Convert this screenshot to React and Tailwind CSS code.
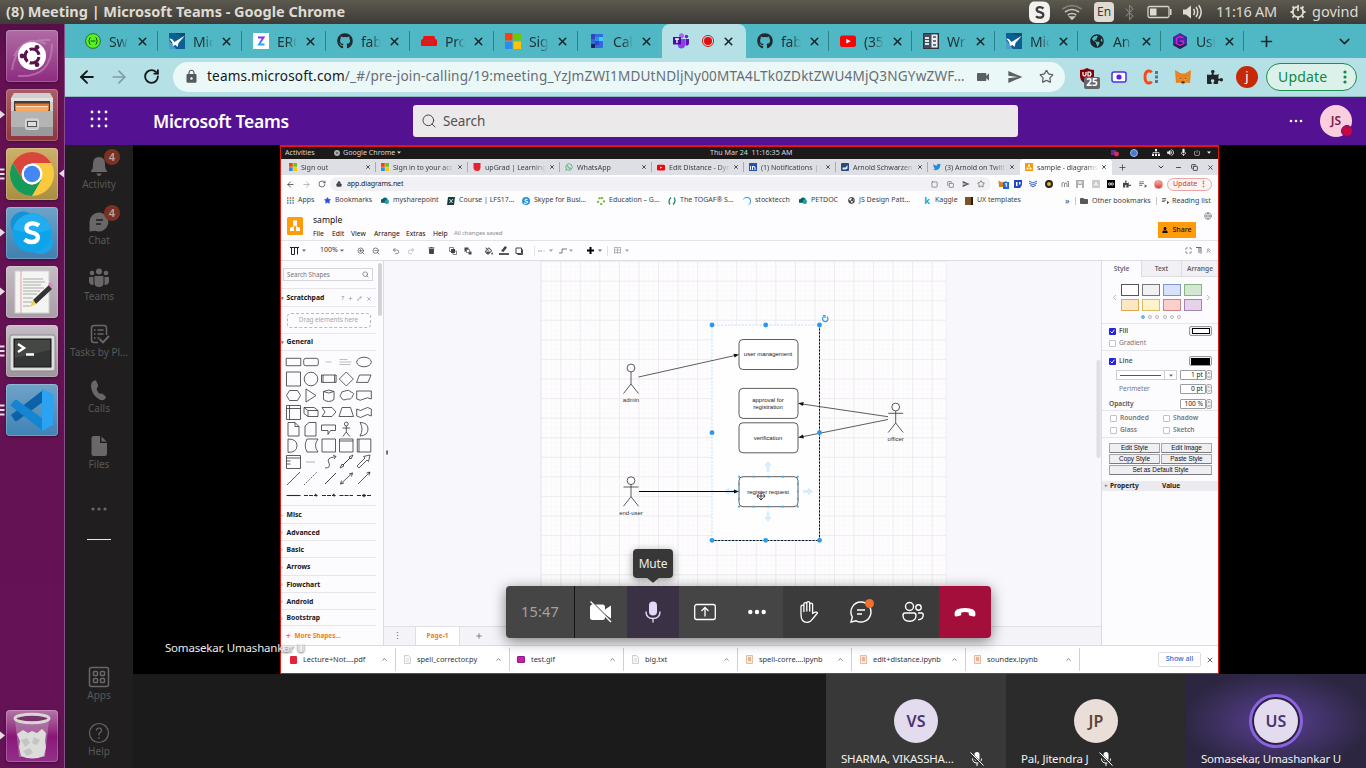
import React from "react";
import {
  ArrowLeft, ArrowRight, RotateCw, X, Plus, ChevronDown, ChevronUp, ChevronLeft, ChevronRight, Search, Lock, Star,
  ZoomIn, ZoomOut, Undo2, Redo2, Globe, Pencil, Bluetooth, Minus, Copy, Maximize, ChevronsUp, Square,
} from "lucide-react";
import { FaGithub, FaTrash, FaUser, FaFolder, FaGlobeAmericas, FaFillDrip, FaWhatsapp, FaTwitter, FaPuzzlePiece } from "react-icons/fa";
import { MdVideocam, MdSend, MdLock, MdMic, MdPowerSettingsNew, MdVolumeUp, MdPlaylistPlay } from "react-icons/md";

const MsLogo = ({ s = 16 }) => (
  <svg width={s} height={s} viewBox="0 0 16 16">
    <path fill="#f8400a" d="M0 0h7.5v7.5H0z" />
    <path fill="#6cc70a" d="M8.5 0H16v7.5H8.5z" />
    <path fill="#2b8cf0" d="M0 8.5h7.5V16H0z" />
    <path fill="#fdc50a" d="M8.5 8.5H16V16H8.5z" />
  </svg>
);
const Swagger = () => (
  <svg width="16" height="16" viewBox="0 0 16 16">
    <circle cx="8" cy="8" r="7.4" fill="#57f020" stroke="#1f5a20" strokeWidth=".8" />
    <path d="M5.5 4.5c-2 0 0 3-2 3.5 2 .5 0 3.5 2 3.5M10.5 4.5c2 0 0 3 2 3.5-2 .5 0 3.5-2 3.5M5.8 8h4.5" stroke="#1a4a1c" strokeWidth="1" fill="none" />
  </svg>
);
const Bird = () => (
  <svg width="16" height="16" viewBox="0 0 16 16">
    <path fill="#0c5f94" d="M0 0h16v16H0z" />
    <path fill="#0a4a76" d="M6 0h10v5z" />
    <path fill="#4d9fcb" d="M0 7l7 9H0z" />
    <path fill="#fff" d="M0 5.5l3 .5 2.5 3L16 2.5 9.500 10l-1 4-2-2-2.500 1L3 9z" />
  </svg>
);
const Zed = () => (
  <svg width="16" height="16" viewBox="0 0 16 16">
    <defs><linearGradient id="zg" x1="0" y1="0" x2="0" y2="1"><stop offset="0" stopColor="#8a2bf0" /><stop offset="1" stopColor="#27a6ff" /></linearGradient></defs>
    <path fill="#fff" d="M0 0h16v16H0z" />
    <path d="M5 4.500h5.500l-4.500 7h5.500" stroke="url(#zg)" strokeWidth="1.900" fill="none" />
  </svg>
);
const Couch = () => (
  <svg width="16" height="16" viewBox="0 0 16 16">
    <path fill="#ee1111" d="M3 3h10q1 0 1 3 2 0 2 2v4q0 1-1 1H1q-1 0-1-1V8q0-2 2-2 0-3 1-3z" />
    <path stroke="#b03a3c" strokeWidth=".7" d="M3.500 7.500h9M3.500 10h9" />
  </svg>
);
const Cal = () => (
  <svg width="16" height="16" viewBox="0 0 16 16">
    <rect x="2" y="1" width="12" height="14" rx="1" fill="#2e6be0" />
    <path fill="#3146b8" d="M2 2q0-1 1-1h3v5H2z" />
    <path fill="#4bc3ff" d="M10 4h4v4h-4z" />
    <path fill="#2193e8" d="M6 4h4v4H6z" />
    <path fill="#3a42c8" d="M6 8h4v4H6z" />
    <path fill="#1b1f66" d="M2 11h4v4H3q-1 0-1-1z" />
  </svg>
);
const TeamsIcon = () => (
  <svg width="16" height="16" viewBox="0 0 16 16">
    <circle cx="8.500" cy="2.800" r="2.500" fill="#a667f5" />
    <circle cx="13.500" cy="3.500" r="1.700" fill="#6a1fd0" />
    <path fill="#8b3fe8" d="M5 6h7v6.500q-.5 3-3.500 3T5 13z" />
    <path fill="#5b10c0" d="M12.500 6H16v4q0 3-3.500 2.500z" />
    <path fill="#4a0fa0" d="M0 4h8v7.500H0z" />
    <path stroke="#fff" strokeWidth="1.300" d="M2 6h4M4 6v4" />
  </svg>
);
const YouTube = ({ s = 16 }) => (
  <svg width={s} height={s} viewBox="0 0 16 16">
    <rect y="2.500" width="16" height="11.500" rx="2.500" fill="#f50505" />
    <path fill="#fff" d="M6.300 5.800v4.800l4.400-2.400z" />
  </svg>
);
const News = () => (
  <svg width="16" height="16" viewBox="0 0 16 16">
    <rect x=".5" y=".5" width="15" height="15" fill="#46505c" stroke="#2b333c" />
    <path fill="#e8eef2" d="M8.500 1.500h6v13h-6z" />
    <path fill="#dfe7ec" d="M2 4h4v2H2zM2 7h4v2H2zM2 10h4v2H2z" />
    <path stroke="#46505c" strokeWidth="1.500" d="M10 4h3M10 8h3M10 12h3" />
  </svg>
);
const Hex = () => (
  <svg width="16" height="16" viewBox="0 0 16 16">
    <path fill="#3f2aa0" d="M8 0l7 4v8l-7 4-7-4V4z" />
    <path fill="#1e2350" d="M8 9l7 3-7 4-7-4z" />
    <path fill="none" stroke="#e31ad0" strokeWidth="1.400" d="M11.500 4.800L8 3.500 4.500 5.500v5L8 12.300l3.500-1.800V8.300H8" />
  </svg>
);
const RecDot = () => (
  <svg width="14" height="14" viewBox="0 0 14 14">
    <circle cx="7" cy="7" r="5.600" fill="none" stroke="#d8231c" />
    <circle cx="7" cy="7" r="4" fill="#e50c0c" />
  </svg>
);

const chromeTabs = [
  { icon: <Swagger />, text: "Sw", w: "w-[84px]" },
  { icon: <Bird />, text: "Mic", w: "w-[84px]" },
  { icon: <Zed />, text: "ERC", w: "w-[84px]" },
  { icon: <FaGithub size={16} color="#24292e" />, text: "fab", w: "w-[84px]" },
  { icon: <Couch />, text: "Pro", w: "w-[84px]" },
  { icon: <MsLogo />, text: "Sig", w: "w-[84px]" },
  { icon: <Cal />, text: "Cal", w: "w-[84px]" },
  { active: true, icon: <TeamsIcon />, w: "w-[84px]" },
  { icon: <FaGithub size={16} color="#24292e" />, text: "fab", w: "w-[83px]" },
  { icon: <YouTube />, text: "(35", w: "w-[83px]" },
  { icon: <News />, text: "Wr", w: "w-[83px]" },
  { icon: <Bird />, text: "Mic", w: "w-[83px]" },
  { icon: <FaGlobeAmericas size={14} color="#1e272c" />, text: "An", w: "w-[83px]" },
  { icon: <Hex />, text: "Usi", w: "w-[83px]" },
];

function TopPanel() {
  return (
    <div className="flex h-6 shrink-0 items-center bg-linear-to-b from-[#5c594f] to-[#3d3b37] pl-1.5 font-['Noto_Sans',sans-serif] text-[#dfdbd2]">
      <div className="w-[1022px] text-[14.5px] font-bold tracking-[-0.02px] whitespace-nowrap">(8) Meeting | Microsoft Teams - Google Chrome</div>
      <svg width="24" height="24" viewBox="0 0 24 24">
        <path fill="#f4f2ee" d="M5 1.500h10q7 0 7 8v6q0 7-7 7.500h-7q-7 0-7-7V8q0-5 4-6.500z" />
        <path d="M15.500 8.500Q13 6.500 10.500 7.300T9 10.500q.5 1.200 3 1.700 3.500.8 3.300 3-.5 2.500-3.500 2.500-2.300 0-3.800-1.500" fill="none" stroke="#3d3b37" strokeWidth="2.300" />
      </svg>
      <svg className="ml-[9px]" width="22" height="18" viewBox="0 0 22 18" fill="none" stroke="#c9c5bc" strokeWidth="1.700">
        <path d="M1.500 6q9.500-7 19 0" opacity=".45" /><path d="M4 9q7-5 14 0" /><path d="M6.700 12q4.300-3 8.600 0" /><path d="M9 14l2 2 2-2z" fill="#dfdbd2" />
      </svg>
      <div className="ml-[11px] flex h-5 w-5 items-center justify-center rounded-sm bg-[#dfdbd2] text-[12px] text-[#3d3b37]">En</div>
      <Bluetooth className="ml-[7px]" size={17} strokeWidth={1.5} color="#85827a" />
      <svg className="ml-[9px]" width="26" height="14" viewBox="0 0 26 14">
        <rect x="1" y="1.500" width="21" height="11" rx="1.500" fill="none" stroke="#d5d1c8" strokeWidth="1.300" /><path fill="#dfdbd2" d="M3 3.500h6.500v7H3zM23 4h1.500v6H23z" />
      </svg>
      <svg className="ml-[9px]" width="22" height="18" viewBox="0 0 22 18" fill="none" stroke="#dfdbd2" strokeWidth="1.500">
        <path fill="#dfdbd2" stroke="none" d="M1 6.500h3L9 2.500v13l-5-4H1z" /><path d="M11.500 6q2 3 0 6M14 4q3.500 5 0 10M16.700 2.300q5 6.700 0 13.400" />
      </svg>
      <div className="ml-[12px] w-[73px] text-[14.5px] tracking-[-0.3px] whitespace-nowrap">11:16 AM</div>
      <svg width="18" height="18" viewBox="0 0 18 18" fill="none" stroke="#dfdbd2">
        <circle cx="9" cy="9" r="5.200" strokeWidth="1.800" strokeDasharray="29 3.670" strokeDashoffset="-26.300" />
        <path strokeWidth="1.800" d="M9 2v6M9 14v3M1.500 9h3M13.500 9h3M3.500 3.500l1.500 1.500M14.500 3.500L13 5M3.500 14.500L5 13M14.500 14.500L13 13" />
      </svg>
      <div className="ml-[5px] text-[14.5px]">govind</div>
    </div>
  );
}

const Tile = ({ bg, children, left, right, gap = "mb-[7px]" }) => (
  <div className={"relative flex h-[52px] w-[52px] shrink-0 items-center justify-center rounded-[4px] shadow-[inset_0_0_0_1px_rgba(255,255,255,.22),0_1px_3px_rgba(0,0,0,.35)] " + bg + " " + gap}>
    {children}
    {left === "one" && <svg className="absolute top-[21px] -left-1.5" width="5" height="9" viewBox="0 0 5 9"><path fill="#e4dce2" d="M0 .5l5 4-5 4z" /></svg>}
    {left === "many" && <svg className="absolute top-[20px] -left-1.5" width="5" height="12" viewBox="0 0 5 12"><path stroke="#e4dce2" strokeWidth="2" d="M0 1.500h4.500M0 6h4.500M0 10.500h4.500" /></svg>}
    {right && <svg className="absolute top-[21px] -right-1.5" width="5" height="9" viewBox="0 0 5 9"><path fill="#e4dce2" d="M5 .5l-5 4 5 4z" /></svg>}
  </div>
);

function Launcher() {
  return (
    <div className="flex w-[65px] shrink-0 flex-col border-r border-[#85518a] bg-linear-to-b from-[#560e49] via-[#641152] via-5% to-[#641356] pt-1.5 pb-1.5 pl-1.5">
      <Tile bg="bg-linear-to-b from-[#b06ba4] to-[#8d2a80]">
        <svg width="52" height="52" viewBox="0 0 52 52">
          <path d="M6 40Q10 8 44 10M12 46Q46 48 46 14M8 26Q20 4 40 14" stroke="#cf98c6" strokeWidth="2" opacity=".5" fill="none" />
          <circle cx="26" cy="26" r="14" fill="#fff" />
          <circle cx="26" cy="26" r="7" fill="none" stroke="#5c1150" strokeWidth="3.200" strokeDasharray="12.200 2.460" strokeDashoffset="-1" />
          <circle cx="16" cy="26" r="2.400" fill="#5c1150" /><circle cx="31" cy="17.300" r="2.400" fill="#5c1150" /><circle cx="31" cy="34.700" r="2.400" fill="#5c1150" />
        </svg>
      </Tile>
      <Tile bg="bg-linear-to-b from-[#ab5d66] to-[#8f353f]" left="one">
        <svg width="52" height="52" viewBox="0 0 52 52">
          <path fill="#cfcfcf" d="M8 4h36l3 5v38H5V9z" /><path fill="#e2e2e2" d="M5 9h42v4H5z" />
          <path fill="#4a3a34" d="M8 12h36v10H8z" /><path fill="#e07a34" d="M9 14.500h34v7H9z" /><path fill="#ffe3c2" d="M10 17h32v1.500H10z" /><path fill="#f6a761" d="M10 18.500h32v3.500H10z" />
          <path fill="#b4b4b4" d="M5 22h42v25H5z" /><path fill="#9a9a9a" d="M5 38h42v9H5z" />
          <rect x="19.500" y="30" width="13" height="10.500" rx="2" fill="#c9c9c9" stroke="#dcdcdc" /><rect x="21.500" y="32.500" width="9" height="5" fill="#ddd" stroke="#555" />
        </svg>
      </Tile>
      <Tile bg="bg-linear-to-b from-[#cdb06a] to-[#a98f42]" left="many" right>
        <svg width="46" height="46" viewBox="-23 -23 46 46">
          <circle r="22" fill="#fbc93e" />
          <path fill="#d9473c" d="M-19.050-11A22 22 0 0 1 19.050-11H0L-9.500 5.500z" />
          <path fill="#159a5a" d="M-19.050-11A22 22 0 0 0 0 22L9.500 5.500 0 11-9.500 5.500z" />
          <circle r="10.500" fill="#fff" /><circle r="8.200" fill="#4487ee" />
        </svg>
      </Tile>
      <Tile bg="bg-linear-to-b from-[#6fa3c8] to-[#3f7fae]" left="one">
        <svg width="52" height="52" viewBox="0 0 52 52">
          <circle cx="17" cy="17" r="12.500" fill="#1592d6" /><circle cx="35" cy="35" r="12" fill="#1aa5e8" />
          <circle cx="26" cy="26" r="19.500" fill="#0fa3ea" /><path fill="#2cb5f3" opacity=".6" d="M7 22a19.500 19.500 0 0 1 38 0q-19 8-38 0z" />
          <path d="M33 18.500q-4-3-8.500-1.800T20.500 22q.5 2.500 5 3.500 6.500 1.200 6.500 5-.8 4.500-6.500 4.500-4 0-7-2.500" fill="none" stroke="#fff" strokeWidth="4.300" />
        </svg>
      </Tile>
      <Tile bg="bg-linear-to-b from-[#c6bcc4] to-[#a99ea8]" left="one">
        <svg width="52" height="52" viewBox="0 0 52 52">
          <path fill="#f4f4f2" stroke="#cfcfcf" d="M9 5h34v42H9z" /><path d="M15 5v42" stroke="#e7a0a0" />
          <path d="M17 13h20M17 16h22M17 19h18M17 22h21M17 25h17M17 28h14M17 32h10M17 36h9M17 40h7" stroke="#a2a2a2" strokeWidth=".9" />
          <path fill="#333" d="M27 34L43 19l3 4-16 15z" /><path fill="#e6d34a" d="M24 41l3-7 3 4z" /><path fill="#d48cc0" d="M42 18l2.500-2 3 3.500-2.500 2.500z" />
        </svg>
      </Tile>
      <Tile bg="bg-linear-to-b from-[#c6bcc6] to-[#9f939e]" left="many">
        <svg width="52" height="52" viewBox="0 0 52 52">
          <rect x="4" y="10" width="45" height="36" rx="2" fill="#dededc" stroke="#8a8a8a" /><rect x="8" y="14" width="37" height="28" fill="#343635" stroke="#111" />
          <path fill="#565856" d="M9 15h35v10L9 33z" opacity=".5" />
          <path d="M12 19l6 4-6 4M20 29.500h8" fill="none" stroke="#fff" strokeWidth="2.400" />
        </svg>
      </Tile>
      <Tile bg="bg-linear-to-b from-[#6fa3c8] to-[#3f83b4]" left="many">
        <svg width="52" height="52" viewBox="0 0 52 52">
          <path fill="#0b62a8" d="M5 31l4 6q1 .7 2 0L37 18V6z" /><path fill="#1385d3" d="M5 20l4-4q1-.8 2 0l26 19v12L5 22q-1-1 0-2z" />
          <path fill="#2ba2f2" d="M36 5l11 5v31l-11 6z" />
        </svg>
      </Tile>
      <Tile bg="mt-auto bg-linear-to-b from-[#b673aa] via-[#8a1578] to-[#93308a]" left="one" gap="">
        <svg width="52" height="52" viewBox="0 0 52 52">
          <path fill="#b58ab0" opacity=".6" d="M9 10h34l-4 37H13z" />
          <path fill="#dcdcda" d="M11 24l6-4 5 3 4-2 5 2 5-4 4 4-1 8 1 6-2 9q-12 5-23 0l-2-9 1-6z" />
          <path fill="#c4c4c2" d="M15 30l6-2 3 5-5 4zM28 27l6 3-3 5-5-2zM17 41l7-3 3 5-6 3z" />
          <ellipse cx="26" cy="8.500" rx="17" ry="4.200" fill="#77306c" stroke="#d6d8d4" strokeWidth="3" />
        </svg>
      </Tile>
    </div>
  );
}

function ChromeBar() {
  return (
    <div className="font-['Noto_Sans',sans-serif]">
      <div className="flex h-[34px] items-center bg-[#50b8c4] pl-[9px] text-[#1c3236]">
        {chromeTabs.map((t, i) => (
          <div key={i} className={"flex shrink-0 items-center " + t.w + (t.active ? " h-[34px] rounded-t-[8px] bg-[#b5e1e6]" : " h-5 border-[#2d7f89] " + (i === 6 ? "" : "border-r"))}>
            <div className="ml-[11px] flex w-4 justify-center">{t.icon}</div>
            {t.active ? (
              <div className="ml-3 flex w-[21px]"><RecDot /></div>
            ) : (
              <div className="ml-2 w-5 overflow-hidden mask-r-from-50% mask-r-to-100% text-[14px] tracking-[-0.2px] whitespace-nowrap">{t.text}</div>
            )}
            <X className={t.active ? "" : "ml-[7px]"} size={13} strokeWidth={2.800} color="#16282c" />
          </div>
        ))}
        <Plus className="ml-3.5" size={17} strokeWidth={2.300} color="#16282c" />
        <ChevronDown className="ml-[61px]" size={17} strokeWidth={2.200} color="#16282c" />
      </div>
      <div className="flex h-[39px] items-center border-b border-[#8fb9be] bg-[#b5e1e6] pb-px pl-3">
        <ArrowLeft size={20} strokeWidth={2.300} color="#16181a" />
        <ArrowRight className="ml-3" size={20} strokeWidth={2} color="#7d9da2" />
        <RotateCw className="ml-3.5" size={17} strokeWidth={2.600} color="#16181a" />
        <div className="ml-[13px] flex h-[30px] w-[892px] items-center rounded-full bg-[#eaf8f8]">
          <MdLock className="ml-[11px]" size={15} color="#55595c" />
          <div className="ml-2 w-[766px] text-[13.6px] tracking-[0.16px] whitespace-nowrap text-[#6a6d72]">
            <span className="text-[#17191c]">teams.microsoft.com</span>/_#/pre-join-calling/19:meeting_YzJmZWI1MDUtNDljNy00MTA4LTk0ZDktZWU4MjQ3NGYwZWF…
          </div>
          <MdVideocam className="ml-[2px]" size={16} color="#5c5f63" />
          <MdSend className="ml-4" size={16} color="#5c5f63" />
          <Star className="ml-4" size={15} strokeWidth={2} color="#5c5f63" />
        </div>
        <div className="relative ml-[14px] h-5 w-5">
          <svg width="16" height="18" viewBox="0 0 16 18"><path fill="#800008" d="M8 1q3 2 7 2v6q0 6-7 8-7-2-7-8V3q4 0 7-2z" /><path d="M4 5v3q1 2 3 0V5M9 5h2q2 2 0 4H9z" fill="none" stroke="#fff" strokeWidth="1.200" /></svg>
          <div className="absolute top-[10px] left-[5px] flex h-3 w-4 items-center justify-center rounded-[2px] bg-[#666] text-[10px] font-bold text-white">25</div>
        </div>
        <svg className="ml-3" width="16" height="12" viewBox="0 0 16 12"><rect x="1" y="1" width="14" height="10" rx="2" fill="#fff" stroke="#4b2ff0" strokeWidth="1.500" /><circle cx="8" cy="6" r="2.600" fill="#5a22e0" /></svg>
        <svg className="ml-4" width="16" height="18" viewBox="0 0 16 18"><path d="M8.500 4.500Q7.500 2.500 5 3 2 4 2 9t3 6q2.500.5 3.500-1.500" fill="none" stroke="#f8471a" strokeWidth="2.900" /><path d="M13.500 3v3M13.500 7.500v3M13.500 12v3" stroke="#5f6ea0" strokeWidth="3" /></svg>
        <svg className="ml-4" width="16" height="16" viewBox="0 0 16 16"><path fill="#e8821e" d="M0 1l6 3.500h4L16 1l-.5 7-.5 6-4-.5-3 2-3-2-4 .5L.5 8z" /><path fill="#f5a13a" d="M2 8l5 1-1 3zM14 8l-5 1 1 3z" /><path fill="#3c2a20" d="M4.500 8.500l2 1-1.500.5zM11.500 8.500l-2 1 1.500.5zM6.500 12.500h3v1.500h-3z" /></svg>
        <FaPuzzlePiece className="ml-4" size={16} color="#22262a" />
        <div className="ml-[13px] flex h-[22px] w-[22px] items-center justify-center rounded-full bg-[#c52a04] text-[13px] text-white">j</div>
        <div className="ml-2 flex h-7 w-[91px] items-center rounded-full border border-[#1a8f4a] bg-[#dcf1ea] pl-[11px] text-[14px] tracking-[0.2px] text-[#0f8a43]">
          Update
          <svg className="mr-[9px] ml-auto" width="4" height="16" viewBox="0 0 4 16" fill="#0f8a43"><circle cx="2" cy="3" r="1.600" /><circle cx="2" cy="8" r="1.600" /><circle cx="2" cy="13" r="1.600" /></svg>
        </div>
      </div>
    </div>
  );
}

function TeamsHeader() {
  return (
    <div className="flex h-12 shrink-0 items-center bg-[#541292] pl-[25px]">
      <svg width="18" height="18" viewBox="0 0 18 18" fill="#fff" className="-mt-1">
        {[2, 9, 16].map((y) => [2, 9, 16].map((x) => <circle key={x + "-" + y} cx={x} cy={y} r="1.400" />))}
      </svg>
      <div className="ml-[45px] w-[260px] text-[17.5px] font-semibold tracking-[-0.3px] text-white">Microsoft Teams</div>
      <div className="flex h-8 w-[605px] items-center rounded-[3px] bg-[#ebe9e9] text-[13.5px] tracking-[-0.1px] text-[#55504f]">
        <Search className="ml-2" size={16} strokeWidth={1.500} color="#4a4646" />
        <span className="ml-1.5">Search</span>
      </div>
      <svg className="ml-[270px]" width="16" height="4" viewBox="0 0 16 4" fill="#fff"><circle cx="3" cy="2" r="1.300" /><circle cx="8" cy="2" r="1.300" /><circle cx="13" cy="2" r="1.300" /></svg>
      <div className="relative ml-4 flex h-8 w-8 items-center justify-center rounded-full bg-[#f9cfdd] text-[12px] font-semibold text-[#7b1b45]">
        JS
        <div className="absolute top-[20px] left-[21px] h-3 w-3 rounded-full border border-[#541292] bg-[#c8063f]" />
      </div>
    </div>
  );
}

const ic = "#696767";
const navItems = [
  { label: "Activity", badge: true, icon: <path fill={ic} d="M3 16q2-2 2-5V9q0-7 6-7t6 7v2q0 3 2 5v1H3zM8.500 18.500h5Q13 21 11 21t-2.500-2.500z" /> },
  { label: "Chat", badge: true, icon: <g><path fill={ic} d="M11 1.500a9.500 9.500 0 1 1-4 18.200L1.500 20.500V11A9.500 9.500 0 0 1 11 1.500z" /><path d="M8 9h7M8 13h5" stroke="#201e1f" strokeWidth="1.300" /></g> },
  { label: "Teams", icon: <g fill={ic}><circle cx="4" cy="6" r="2.300" /><circle cx="11" cy="4.500" r="3" /><circle cx="18" cy="6" r="2.300" /><path d="M1 10h4.500v8Q1 18 1 14zM21 10h-4.500v8q4.500 0 4.500-4zM6.500 9h9v7q0 4-4.500 4t-4.500-4z" /></g> },
  { label: "Tasks by Pl…", icon: <g fill="none" stroke={ic} strokeWidth="1.500"><path d="M10 19.500H6q-2.500 0-2.500-2.500V5Q3.500 2.500 6 2.500h10q2.500 0 2.500 2.500v7M9.500 7h6M9.500 11h6M9.500 15h2M6 7h1.500M6 11h1.500M6 15h1.500" /><path strokeWidth="1.900" d="M11.500 16l3.500 3.500 6-6.500" /></g> },
  { label: "Calls", icon: <path fill={ic} d="M8 1.500l2 4.500q.5 1.500-1 3-.7 1 .3 2.800t2.200 3q1.500-.8 3 0l3 2.500q1 1-.5 2.700-2 2-5 .8Q3.500 16.500 3 7 3 3 5.500 2q2-1 2.500-.5z" /> },
  { label: "Files", icon: <g fill={ic}><path d="M3.500 3q0-2 2-2H12v7h7v11q0 2-2 2H5.500q-2 0-2-2z" /><path d="M13.500 1.500L18.500 6.500h-5z" /></g> },
];
const footItems = [
  { label: "Apps", icon: <g fill="none" stroke={ic} strokeWidth="1.500"><rect x="1.500" y="1.500" width="19" height="19" rx="2" /><rect x="5.500" y="5.500" width="4" height="4" rx=".8" /><rect x="12.500" y="5.500" width="4" height="4" rx=".8" /><rect x="5.500" y="12.500" width="4" height="4" rx=".8" /><rect x="12.500" y="12.500" width="4" height="4" rx=".8" /></g> },
  { label: "Help", icon: <g fill="none" stroke={ic} strokeWidth="1.200"><circle cx="11" cy="11" r="9.500" /><path d="M8.500 8.500Q8.500 6 11 6t2.500 2.500Q13.500 10 11 11.500V13.500" /><path d="M11 15.300v1.500" strokeWidth="1.500" /></g> },
];
const NavItem = ({ item }) => (
  <div className="relative flex h-14 flex-col items-center pt-[10px]">
    <svg width="22" height="22" viewBox="0 0 22 22">{item.icon}</svg>
    <div className="text-[10px] leading-[15px] whitespace-nowrap text-[#5a5859]">{item.label}</div>
    {item.badge && <div className="absolute top-1 left-[39px] flex h-4 w-4 items-center justify-center rounded-full bg-[#793122] text-[11px] font-semibold text-[#b9a59f]">4</div>}
  </div>
);
function Sidebar() {
  return (
    <div className="flex w-[68px] shrink-0 flex-col bg-[#201e1f]">
      {navItems.map((n) => <NavItem key={n.label} item={n} />)}
      <div className="flex h-14 items-center justify-center"><svg width="16" height="4" viewBox="0 0 16 4" fill={ic}><circle cx="2" cy="2" r="1.600" /><circle cx="8" cy="2" r="1.600" /><circle cx="14" cy="2" r="1.600" /></svg></div>
      <div className="mx-auto mt-[2px] h-px w-6 bg-[#e6e6e6]" />
      <div className="mt-auto">{footItems.map((n) => <NavItem key={n.label} item={n} />)}</div>
    </div>
  );
}

const Dot = ({ c, square }) => <span className={"block h-[8px] w-[8px] " + c + (square ? " rounded-[1px]" : " rounded-full")} />;
const DrawioMark = ({ s }) => (
  <svg width={s} height={s} viewBox="0 0 16 16"><rect width="16" height="16" rx="1.500" fill="#ff9800" /><path stroke="#fff" strokeWidth="1.200" d="M8 6L4.500 10.500M8 6l3.500 4.500" /><path fill="#fff" d="M6 3h4v3.500H6zM3 9.500h4V13H3zM9 9.500h4V13H9z" /></svg>
);
const Shield = () => <svg width="8" height="8" viewBox="0 0 8 8"><path fill="#e8202f" d="M.5 0h7v5Q7 8 4 8T.5 5z" /></svg>;
const LinkedIn = () => <svg width="8" height="8" viewBox="0 0 8 8"><path fill="#1f55b5" d="M0 0h8v8H0z" /><path stroke="#fff" d="M1.500 3v4M3.500 7V3M3.500 4q2.500-1.500 2.500 1v2" fill="none" /></svg>;
const Plane = () => <svg width="8" height="8" viewBox="0 0 8 8"><rect width="8" height="8" rx="1" fill="#27497f" /><path fill="#dfe8f5" d="M1.500 4.500h3l2-2.500v3.500l-2 1h-3z" /></svg>;
const SharePoint = () => <svg width="9" height="8" viewBox="0 0 9 8"><circle cx="4.500" cy="3" r="3" fill="#07696f" /><circle cx="6.500" cy="4.800" r="2.500" fill="#1aa0a8" /><path fill="#0a5c61" d="M0 2h4v4H0z" /></svg>;
const innerTabs = [
  { icon: <MsLogo s={8} />, text: "Sign out" },
  { icon: <MsLogo s={8} />, text: "Sign in to your acc" },
  { icon: <Shield />, text: "upGrad | Learning" },
  { icon: <FaWhatsapp size={8} color="#17a54a" />, text: "WhatsApp" },
  { icon: <YouTube s={9} />, text: "Edit Distance - Dyn" },
  { icon: <LinkedIn />, text: "(1) Notifications | L" },
  { icon: <Plane />, text: "Arnold Schwarzen" },
  { icon: <FaTwitter size={8} color="#1b8fe0" />, text: "(3) Arnold on Twitt" },
  { icon: <DrawioMark s={8} />, text: "sample - diagrams", active: true },
];
const bookmarks = [
  { w: "w-[37px]", icon: <svg width="7" height="7" viewBox="0 0 7 7"><path stroke="#d9453a" strokeDasharray="1.500 1.200" strokeWidth="1.500" d="M0 1h7" /><path stroke="#3f9a53" strokeDasharray="1.500 1.200" strokeWidth="1.500" d="M0 3.500h7" /><path stroke="#3d74dd" strokeDasharray="1.500 1.200" strokeWidth="1.500" d="M0 6h7" /></svg>, text: "Apps" },
  { w: "w-[58px]", icon: <Star size={7} color="#2b4fd8" fill="#2b4fd8" />, text: "Bookmarks" },
  { w: "w-[66px]", icon: <SharePoint />, text: "mysharepoint" },
  { w: "w-[75px]", icon: <svg width="8" height="8" viewBox="0 0 8 8"><path fill="#173e3f" d="M1 0h7L7 8H0z" /><path stroke="#fff" strokeWidth=".8" d="M2.500 2l3 4M6 2L2.500 6" /></svg>, text: "Course | LFS17…" },
  { w: "w-[75px]", icon: <svg width="8" height="8" viewBox="0 0 8 8"><circle cx="4" cy="4" r="4" fill="#2b93dc" /><path stroke="#fff" fill="none" d="M5.500 2.500Q3 1.700 2.800 3T5 4.500 4.500 6t-2-.4" /></svg>, text: "Skype for Busi…" },
  { w: "w-[71px]", icon: <span className="block h-2 w-2 rounded-full border-2 border-dotted border-[#7cb342]" />, text: "Education – G…" },
  { w: "w-[75px]", icon: <svg width="8" height="8" viewBox="0 0 8 8"><path d="M3 .5Q-.5 4 2 7.500M5 7.500Q8.500 4 6 .5" stroke="#157a6a" strokeWidth="1.200" fill="none" /></svg>, text: "The TOGAF® S…" },
  { w: "w-[56px]", icon: <span className="block h-2 w-2 rounded-full border-t border-r border-[#3a97d8]" />, text: "stocktecch" },
  { w: "w-[48px]", icon: <SharePoint />, text: "PETDOC" },
  { w: "w-[76px]", icon: <FaGlobeAmericas size={7} color="#44474b" />, text: "JS Design Patt…" },
  { w: "w-[42px]", icon: <span className="text-[9px] font-bold text-[#1e9fd6]">k</span>, text: "Kaggle" },
  { w: "w-[100px]", icon: <span className="block h-2 w-2 border-r-2 border-[#2a1c0e] bg-[#7a5428]" />, text: "UX templates" },
];
const I = ({ w, children }) => <span className={"flex shrink-0 items-center justify-center " + w}>{children}</span>;
const Caret = ({ c = "#666" }) => <svg width="4" height="3" viewBox="0 0 4 3"><path fill={c} d="M0 .5h4L2 2.700z" /></svg>;

function InnerChrome() {
  return (
    <div className="text-[7px] text-[#3c3f44]">
      <div className="flex h-3 items-center bg-[#1c191a] pb-px pl-1 text-[7.1px] text-[#d8d8d8]">
        <span className="w-[49px]">Activities</span>
        <span className="mr-[3px] h-[6px] w-[6px] rounded-full border-2 border-[#aaa] bg-[#555]" />
        <span className="w-[54px] whitespace-nowrap">Google Chrome</span>
        <Caret c="#d8d8d8" />
        <span className="ml-[309px] w-[400px] shrink-0 whitespace-nowrap">Thu Mar 24&nbsp; 11:16:35 AM</span>
        <I w="w-[9px]"><svg width="8" height="8" viewBox="0 0 8 8"><path fill="#5b2f9a" d="M0 1h5v5H0z" /><circle cx="5.500" cy="5" r="2.400" fill="#e02a58" /></svg></I>
        <I w="w-[30px]"><span className="h-2 w-2 rounded-full border border-[#9cb8ec] bg-[#4a78d0]" /></I>
        <I w="w-[14px]"><svg width="8" height="7" viewBox="0 0 8 7"><path fill="#eee" d="M3 0h2v2H3zM0 5h2v2H0zM3 5h2v2H3zM6 5h2v2H6z" /><path stroke="#eee" strokeWidth=".7" d="M4 2v3M1 5V3.500h6V5" fill="none" /></svg></I>
        <I w="w-[14px]"><MdVolumeUp size={9} color="#eee" /></I>
        <I w="w-[13px]"><MdMic size={9} color="#eee" /></I>
        <I w="w-[14px]"><MdPowerSettingsNew size={8} color="#bbb" /></I>
        <I w="w-[9px]"><Caret c="#eee" /></I>
      </div>
      <div className="flex h-4 items-center bg-[#dedee5] pl-[3px]">
        {innerTabs.map((t, i) => (
          <div key={i} className={"flex w-[92px] shrink-0 items-center " + (t.active ? "h-4 rounded-t-[4px] bg-[#fdfdfd]" : "h-2.5 " + (i < 7 ? "border-r border-[#a9a9b2]" : ""))}>
            <span className="ml-[5px] flex w-2 justify-center">{t.icon}</span>
            <span className="ml-1 w-[61px] overflow-hidden mask-r-from-80% mask-r-to-100% text-[7.1px] tracking-[-0.05px] whitespace-nowrap">{t.text}</span>
            <X className="ml-[3px]" size={6} strokeWidth={3.500} color="#3a3a3e" />
          </div>
        ))}
        <Plus className="ml-1.5" size={9} color="#3a3a3e" />
        <ChevronDown className="ml-[30px]" size={8} strokeWidth={3} color="#3a3a3e" />
        <Minus className="ml-[10px]" size={7} strokeWidth={3} color="#3a3a3e" />
        <Copy className="ml-[9px]" size={7} strokeWidth={3} color="#3a3a3e" />
        <X className="ml-[9px]" size={7} color="#3a3a3e" strokeWidth={3} />
      </div>
      <div className="flex h-[18px] items-center bg-[#fdfdfe] pl-[5px]">
        <ArrowLeft size={9} color="#33363a" />
        <ArrowRight className="ml-[7px]" size={9} color="#a4a6aa" />
        <RotateCw className="ml-[7px]" size={8} color="#33363a" />
        <div className="ml-1 flex h-[14px] w-[661px] items-center rounded-full bg-[#f0f0f5]">
          <Lock className="ml-1.5" size={6} color="#44474a" fill="#44474a" />
          <span className="ml-[5px] w-[583px] text-[7px] tracking-[-0.1px] text-[#222]">app.diagrams.net</span>
          <I w="w-[11px]"><Square size={7} color="#555" /></I>
          <I w="w-[20px]"><Copy size={7} color="#555" /></I>
          <I w="w-[11px]"><MdSend size={8} color="#555" /></I>
          <I w="w-[20px]"><Star size={8} color="#555" /></I>
        </div>
        <div className="relative ml-[7px] w-[9px]">
          <svg width="9" height="8" viewBox="0 0 16 16"><path fill="#e07d1c" d="M0 1l6 3.500h4L16 1v13H1z" /></svg>
          <span className="absolute top-[2px] left-[5px] flex h-[7px] w-[6px] items-center justify-center bg-[#1f66d8] text-[6px] font-bold text-white">1</span>
        </div>
        <I w="w-[21px]"><svg width="8" height="8" viewBox="0 0 8 8"><path fill="#2447cc" d="M0 0h8v5l-2 3H0z" /><path fill="#fff" d="M2 2h1.500v4H2zM5 2h1.500v2.500H5z" /></svg></I>
        <I w="w-[10px]"><svg width="8" height="8" viewBox="0 0 8 8"><path fill="none" stroke="#3b66d0" d="M0 1l4 2 4-2M0 3l4 2 4-2M1 5l3 2 3-2" /></svg></I>
        <I w="w-[21px]"><span className="h-2 w-2 rounded-sm border-2 border-[#26241c] bg-[#d9b42e]" /></I>
        <I w="w-[11px]"><svg width="8" height="8" viewBox="0 0 8 8"><path d="M1 7V3q2-1.500 2.500.5V7M3.500 3.500Q6 2 6 4v3M6 1.500h1.500V7" stroke="#8a8a8e" fill="none" /></svg></I>
        <I w="w-[20px]"><svg width="8" height="8" viewBox="0 0 8 8"><path fill="#b0b0b4" d="M0 0h8v8H6V5H2v3H0z" /><path fill="#eee" d="M2 1.500h4v2H2z" /></svg></I>
        <I w="w-[11px]"><svg width="8" height="8" viewBox="0 0 8 8"><path fill="#cacacd" d="M0 0h8v8H0z" /><path d="M2 6l2-4 2 4M3 4.500h2" stroke="#f6f6f6" fill="none" /></svg></I>
        <I w="w-[20px]"><svg width="8" height="8" viewBox="0 0 8 8"><path fill="#000" d="M0 0h8v8H0z" /><circle cx="2.700" cy="4" r="1.200" fill="none" stroke="#fff" strokeWidth=".8" /><circle cx="5.300" cy="4" r="1.200" fill="none" stroke="#fff" strokeWidth=".8" /></svg></I>
        <I w="w-[11px]"><FaPuzzlePiece size={8} color="#44474a" /></I>
        <I w="w-[21px]"><MdPlaylistPlay size={10} color="#55585c" /></I>
        <I w="w-[10px]"><span className="h-[9px] w-[9px] rounded-full border border-[#e87a7a] bg-linear-to-b from-[#f3b0a8] to-[#d82d3a]" /></I>
        <div className="ml-[4px] flex h-[13px] w-[45px] items-center justify-between rounded-full border border-[#e8a7a2] bg-[#fdf3f3] pr-1 pl-[5px] text-[7px] text-[#c93730]">
          Update <span className="font-bold">⋮</span>
        </div>
      </div>
      <div className="flex h-[15px] items-center bg-[#fdfdfe] pl-[5px]">
        {bookmarks.map((b) => (
          <div key={b.text} className={"flex shrink-0 items-center gap-1 whitespace-nowrap " + b.w}>
            <span className="flex w-2 justify-center">{b.icon}</span><span>{b.text}</span>
          </div>
        ))}
        <span className="w-2.5 text-[9px]">»</span>
        <span className="h-2 w-px bg-[#c5c5ca]" />
        <FaFolder className="ml-1" size={8} color="#55585c" />
        <span className="ml-1 w-[64px] text-[7.1px] whitespace-nowrap">Other bookmarks</span>
        <span className="h-2 w-px bg-[#c5c5ca]" />
        <MdPlaylistPlay className="ml-1" size={9} color="#3c3f44" />
        <span className="ml-[2px] text-[7.1px] whitespace-nowrap">Reading list</span>
      </div>
    </div>
  );
}

function DrawioHeader() {
  return (
    <div className="bg-[#fdfcfe] text-[#111]">
      <div className="flex h-[33px] border-b border-[#e3e2e6]">
        <svg className="mt-[9px] ml-[6px]" width="16" height="18" viewBox="0 0 16 18"><rect width="16" height="18" rx="1.500" fill="#ff9a08" /><path stroke="#fff" strokeWidth="1.200" d="M8 7l-3 5M8 7l3 5" /><path fill="#fff" d="M6 3.500h4V8H6zM3 10.500h4V14H3zM9 10.500h4V14H9z" /></svg>
        <div className="ml-[10px] flex w-[845px] flex-col pt-[6px]">
          <div className="text-[8.6px] leading-[12px]">sample</div>
          <div className="mt-[2px] flex text-[6.8px] leading-[11px] whitespace-nowrap">
            <span className="w-[19px]">File</span><span className="w-[19px]">Edit</span><span className="w-[23px]">View</span><span className="w-[32px]">Arrange</span><span className="w-[27px]">Extras</span><span className="w-[21px]">Help</span>
            <span className="text-[6px] tracking-[-0.1px] text-[#8d8b90]">All changes saved</span>
          </div>
        </div>
        <div className="mt-[14px] flex h-4 w-[38px] items-center justify-center gap-1 bg-[#ff9a08] text-[7px] font-medium"><FaUser size={6} />Share</div>
        <Globe className="mt-1 ml-2" size={8} color="#777" />
      </div>
      <div className="flex h-5 items-center border-b border-[#dddce0] pl-[9px] text-[7px] text-[#333]">
        <svg width="9" height="8" viewBox="0 0 9 8"><path fill="none" stroke="#222" d="M0 .5h9M1.500 .5v7h3v-7M7.500 .5v7" /></svg>
        <I w="w-[9px]"><Caret /></I>
        <span className="ml-[12px] w-[20px]">100%</span><Caret />
        <I w="w-[34px]"><ZoomIn size={8} color="#444" /></I>
        <ZoomOut className="-ml-1.5" size={8} color="#444" />
        <Undo2 className="ml-[12px]" size={8} color="#555" />
        <Redo2 className="ml-[7px]" size={8} color="#aaa" />
        <FaTrash className="ml-[13px]" size={7} color="#444" />
        <svg className="ml-[14px]" width="8" height="8" viewBox="0 0 8 8"><path fill="#444" d="M2 2h4v4H2z" /><path fill="none" stroke="#666" strokeWidth=".8" d="M4.500 2V.5h-4v4H2M6 4h1.500v3.500H4V6" /></svg>
        <svg className="ml-[7px]" width="8" height="8" viewBox="0 0 8 8"><path fill="#444" d="M.5 .5h4v4h-4zM4.500 4.500h3v3h-3z" /><path fill="#fdfcfe" stroke="#666" strokeWidth=".8" d="M2.500 2.500h3v3h-3z" /></svg>
        <FaFillDrip className="ml-[13px]" size={8} color="#555" />
        <svg className="ml-[6px]" width="10" height="9" viewBox="0 0 10 9"><path fill="#444" d="M2 5l4-5 2 1.500-3.500 4.500z" /><path stroke="#222" strokeWidth="1.500" d="M0 8h10" /></svg>
        <svg className="ml-[6px]" width="8" height="8" viewBox="0 0 8 8"><path fill="none" stroke="#444" d="M1 1h5.500v5.500H1zM7.500 2.500v5h-5" /></svg>
        <span className="ml-[11px] h-2.5 w-px bg-[#e2e2e6]" />
        <svg className="mr-[3px] ml-[3px]" width="8" height="6" viewBox="0 0 8 6"><path stroke="#aaa" d="M0 3h4M5.500 3h1" /></svg><Caret c="#999" />
        <svg className="mr-[2px] ml-[6px]" width="8" height="6" viewBox="0 0 8 6"><path fill="none" stroke="#777" d="M0 5h3V1h5" /></svg><Caret c="#999" />
        <svg className="mr-[4px] ml-[14px]" width="7" height="7" viewBox="0 0 7 7"><path stroke="#000" strokeWidth="2" d="M3.500 0v7M0 3.500h7" /></svg><Caret />
        <span className="mr-[6px] ml-[5px] h-2.5 w-px bg-[#e2e2e6]" />
        <svg width="7" height="7" viewBox="0 0 7 7"><path stroke="#aaa" strokeWidth=".8" d="M0 .5h7M0 3h7M0 5.500h7M.5 0v7M3.500 0v7M6.500 0v7" /></svg>
        <span className="ml-1"><Caret c="#999" /></span>
        <div className="mr-[6px] ml-auto flex gap-[3px]"><Maximize size={7} color="#333" /><svg width="7" height="7" viewBox="0 0 7 7"><path fill="none" stroke="#444" strokeWidth=".8" d="M1 .5h5v6M4 1v5" /></svg><ChevronsUp size={7} color="#333" /></div>
      </div>
    </div>
  );
}

const Palette = () => (
  <svg width="95" height="155" viewBox="281 351 95 155" fill="none" stroke="#2b2a2e" strokeWidth=".75">
    <path d="M286.200 358.300h14.600v7.400h-14.600zM286.500 372h14v14h-14zM321.500 375h14.600v7.400h-14.600zM323 375v7.400M334.600 375v7.400M346.300 372l7 7-7 7-7-7zM359.500 375h11.500l-3 7.400h-11.500z" />
    <rect x="303.700" y="358.300" width="14.600" height="7.400" rx="2" /><ellipse cx="364" cy="362" rx="7.300" ry="4.800" /><circle cx="311" cy="379" r="6.800" />
    <path stroke="#aaa" d="M325.500 362h6M339.500 359.500h8M339.500 362h12M339.500 364.500h11" />
    <path d="M289.500 390.500h8l3 5-3 5h-8l-3-5zM306 389l10 6.500-10 6.500zM323.500 391.500v8q5 4 10.500 0v-8q-5-3-10.500 0 5 3 10.500 0M341 394q0-3 4-3 4-2 6 1 4 1 1.500 4-1 4-5 3-5 2-6-1-3-2-.5-4zM356.700 391h14.600v8q-4-2.500-7.500 0t-7.100 0z" />
    <path d="M286.500 405.500h14v14h-14zM286.500 408.500h14M289.500 405.500v14M304 407.500h10l4 3v6h-10l-4-3zM304 407.500l4 3h10M308 410.500v6M322 407.500h10l4 4.500-4 4.500h-10l3-4.500zM342 407.500h8.500l3 9h-14.500zM356.700 409q4 3 7.300 0t7.300 0v7q-4-3-7.300 0t-7.300 0z" />
    <path d="M288 422.500h7l4 4v9.500h-11zM295 422.500v4h4M309 422.500h7v13.500h-11V426zM321.500 425h14v5.500h-5l-2.500 4v-4h-6.500zM346.300 426v6l-3.500 4.500M346.300 432l3.500 4.500M342.500 428h7.600M360 422.500q8 0 8 6.500t-8 7q4-7 0-13.500z" />
    <circle cx="346.300" cy="424" r="1.900" />
    <path d="M288 439q9 0 9 6.700t-9 6.700zM307 439h11q-5 6.500 0 13h-11q-3.500-6.500 0-13zM322 439h13.500v13H322zM339.500 439H353v13h-13.500zM339.500 441H353M357.300 439h13.500v13h-13.500zM359 439v13M286.500 455.500h14v13h-14zM286.500 458h14M286.500 461h4M286.500 464h4" />
    <path stroke="#999" d="M306 462h9" />
    <path d="M325 468q6 0 4-5-3-5 5-6l1.500-.5M333 455l3 1.500-2 2.500M340 468l2-4 1 1 7-7-1-1 4-2-2 4-1-1-7 7 1 1zM357 466l8-8-1.500-1.500 6.500-1.500-1.500 6.500-1.500-1.500-8 8z" />
    <path strokeWidth=".9" d="M325 484l11-11" /><path d="M287 485l13-13M340.500 484l12-11M352.500 473l-3.500 1M352.500 473l-1 3.500M340.500 484l1-3.500M340.500 484l3.500-1M358 484l12-12M370 472l-3.500 1M370 472l-1 3.500" /><path strokeDasharray="1.500 1" d="M304 485l13-13" />
    <path strokeWidth="1.100" d="M286.500 495.500h14" /><path strokeDasharray="4 1" strokeWidth="1.100" d="M304 495.500h13M322 495.500h13M339.500 495.500H353M357 495.500h14M315 494l2 1.500-2 1.500M333 494l2 1.500-2 1.500" /><circle cx="364" cy="495.500" r="1.300" />
  </svg>
);

const SideRow = ({ h, t }) => (
  <div className={"flex w-[95px] items-center border-b border-[#e6e5e9] pt-[2px] text-[6.8px] font-bold text-[#16151a] " + h}><span className="w-[5.500px] text-[5px] text-[#999]">›</span>{t}</div>
);
function ShapesPanel() {
  return (
    <div className="relative w-[103px] shrink-0 border-r border-[#dcdbe0] bg-[#fcfbfd]">
      <div className="flex h-[28px] w-[95px] items-center border-b border-[#e6e5e9] pl-[2px]">
        <div className="flex h-[13px] w-[90px] items-center justify-between border border-[#d6d5da] px-[3px] text-[6.3px] text-[#77757c]">Search Shapes <Search size={7} color="#555" /></div>
      </div>
      <div className="flex h-[18px] w-[95px] items-center border-b border-[#e6e5e9] pt-[2px] text-[6.8px] font-bold text-[#16151a]">
        <span className="w-[5.500px] text-[5px] text-[#777]">▾</span>Scratchpad
        <span className="mr-[4px] ml-auto flex items-center gap-[4px] text-[6px] font-normal text-[#777]">?<Plus size={5} /><Pencil size={5} /><X size={6} /></span>
      </div>
      <div className="flex h-[27px] w-[95px] items-center justify-center border-b border-[#e6e5e9]">
        <div className="flex h-[15px] w-[84px] items-center justify-center rounded-[4px] border border-dashed border-[#bbbac0] text-[6.4px] text-[#a8a7ad]">Drag elements here</div>
      </div>
      <div className="flex h-[17px] w-[95px] items-center border-b border-[#e6e5e9] pt-[1px] text-[6.8px] font-bold text-[#16151a]"><span className="w-[5.500px] text-[5px] text-[#777]">▾</span>General</div>
      <div className="h-[155px] w-[95px] border-b border-[#e6e5e9]"><Palette /></div>
      <SideRow h="h-[18px]" t="Misc" /><SideRow h="h-[17px]" t="Advanced" /><SideRow h="h-[17px]" t="Basic" /><SideRow h="h-[18px]" t="Arrows" />
      <SideRow h="h-[17px]" t="Flowchart" /><SideRow h="h-[17px]" t="Android" /><SideRow h="h-[16px]" t="Bootstrap" />
      <div className="flex h-[19px] items-center pl-[5px] text-[6.4px] font-bold text-[#ee7d1b]"><span className="mr-1 text-[8px]">+</span>More Shapes…</div>
      <div className="absolute top-0.5 right-px h-[53px] w-1 rounded-sm bg-[#d3d2d8]" />
    </div>
  );
}

const Actor = ({ x, y, label, arms = true }) => (
  <g>
    <circle cx={x} cy={y} r="3.900" />
    <path d={`M${x} ${y + 4}v12M${x - 7.5} ${y + 25.5}l7.5-9.5 7.5 9.5`} />
    {arms && <path d={`M${x - 7.5} ${y + 6.3}h15`} />}
    <text x={x} y={y + 34} textAnchor="middle" stroke="none" fill="#333">{label}</text>
  </g>
);
const Box = ({ y, lines }) => (
  <g>
    <rect x="739" y={y} width="59" height="30" rx="4" fill="#fff" />
    {lines.map((l, i) => <text key={l} x="768" y={y + 16.8 + (i - (lines.length - 1) / 2) * 7.4} textAnchor="middle" stroke="none" fill="#222">{l}</text>)}
  </g>
);
const Handle = ({ x, y }) => <circle cx={x} cy={y} r="2.400" fill="#2b98f0" stroke="none" />;

function Canvas() {
  const vx = Array.from({ length: 21 }, (_, k) => 541.2 + k * 19.55);
  const hy = Array.from({ length: 19 }, (_, k) => 261.6 + k * 19.57);
  const minors = Array.from({ length: 83 }, (_, k) => 541.2 + k * 4.888);
  const hminors = Array.from({ length: 75 }, (_, k) => 261.6 + k * 4.893);
  const anchors = [739, 753.7, 768.3, 783, 797.8];
  return (
    <svg width="717" height="365" viewBox="384 261 717 365" fontFamily="Liberation Sans, sans-serif" fontSize="6" className="block">
      <path fill="#f8f7fb" d="M384 261h717v365H384z" />
      <path fill="#fefdfe" stroke="#ecebef" strokeWidth=".8" d="M540.500 260h405.500v367H540.500z" />
      <g stroke="#faf8fb" strokeWidth=".7">
        {minors.map((x) => <path key={x} d={`M${x} 261v365`} />)}
        {hminors.map((y) => <path key={y} d={`M541 ${y}h405`} />)}
      </g>
      <g stroke="#ebe8ee" strokeWidth=".8">
        {vx.map((x) => <path key={x} d={`M${x} 261v365`} />)}
        {hy.map((y) => <path key={y} d={`M541 ${y}h405`} />)}
      </g>
      <path fill="#fefefe" d="M712 325h107.500v215.500H712z" />
      <path d="M712 540V325h107" stroke="#b4dffa" strokeDasharray="2 1.500" strokeWidth=".9" fill="none" />
      <path d="M819.500 325v215.500H712" stroke="#7ba9d6" strokeWidth=".9" fill="none" /><path d="M819.500 325v215.500H712" stroke="#111" strokeDasharray="2 1.500" strokeWidth="1" fill="none" />
      <path fill="#d9edfb" d="M724 491.500l5-4v2.500h7v3h-7v2.500z" />
      <g fill="none" stroke="#333" strokeWidth=".8">
        <Actor x={631} y={368} label="admin" arms={false} />
        <Actor x={631} y={480.7} label="end-user" />
        <Actor x={895.7} y={407} label="officer" />
        <Box y={339.5} lines={["user management"]} />
        <Box y={388.4} lines={["approval for", "registration"]} />
        <Box y={422.8} lines={["verification"]} />
        <Box y={476.7} lines={["register request"]} />
        <path d="M638.500 377L735 355.500M888 416.700L802 404M888 419.500L802 436.800" /><path strokeWidth="1.200" stroke="#000" d="M639 491.500h96" />
      </g>
      <path fill="#111" d="M739 354.500l-5.500-.8 1.200 3.800zM798 403.300l5.700-1.200-.7 4zM798 437.600l5-3 .8 4zM739 491.500l-5-2v4z" />
      <g fill="#3fa5ea">
        {anchors.map((x) => [476.7, 506.6].map((y) => <rect key={x + "/" + y} x={x - 0.9} y={y - 0.9} width="1.800" height="1.800" />))}
        {[739, 797.8].map((x) => [484, 491.5, 499].map((y) => <rect key={x + "/" + y} x={x - 0.9} y={y - 0.9} width="1.800" height="1.800" />))}
      </g>
      <path fill="#d9edfb" d="M768 461l4 5h-2.500v6h-3v-6H764zM768 522l4-5h-2.500v-5.500h-3v5.500H764zM813 491.500l-5-4v2.500h-5v3h5v2.500z" />
      <path d="M757 496h8M761 492v8M758.500 494l-1.500 2 1.500 2M763.500 494l1.500 2-1.500 2M759 498l2 2 2-2" stroke="#222" strokeWidth=".8" fill="none" />
      {[712, 765.7, 819.5].map((x) => [325, 540.3].map((y) => <Handle key={x + "," + y} x={x} y={y} />))}
      <Handle x={712} y={432.7} /><Handle x={819.5} y={432.7} />
      <path d="M827 316.800a2.700 2.700 0 1 1-3.200-.2M823 315.500h2v2.500" fill="none" stroke="#2b98f0" strokeWidth="1.200" />
      <rect x="1096.500" y="360" width="4" height="98" rx="2" fill="#dfdee4" />
      <path fill="#444" d="M386.300 450.500h1.500v4h-1.500z" />
    </svg>
  );
}

const Chk = ({ on }) => on
  ? <svg width="7" height="7" viewBox="0 0 7 7"><rect width="7" height="7" rx="1" fill="#2222e0" /><path d="M1.500 3.500L3 5l2.500-3.300" stroke="#fff" fill="none" /></svg>
  : <span className="block h-[7px] w-[7px] rounded-[1px] border border-[#c3c2c7] bg-white" />;
const swatches = ["bg-white border-[#555]", "bg-[#f1f1f2] border-[#777]", "bg-[#d8e3fb] border-[#7d97cc]", "bg-[#d3e8d3] border-[#8ab583]", "bg-[#fde6c4] border-[#dfab4f]", "bg-[#fff3c9] border-[#d9bd66]", "bg-[#fbcfcc] border-[#cf8380]", "bg-[#e6d3e9] border-[#a285b0]"];
const NumBox = ({ v }) => (
  <span className="flex"><span className="flex h-[10px] w-[26px] items-center justify-end rounded-[1px] border border-[#9b9a9f] bg-white pr-[2px] text-[6.6px] font-normal text-[#222]">{v}</span>
    <span className="flex h-[10px] w-[6px] flex-col items-center justify-between rounded-xs border border-[#aaa] bg-[#f0f0f2]"><ChevronUp size={4} strokeWidth={4} /><ChevronDown size={4} strokeWidth={4} /></span></span>
);
const Btn = ({ w, children }) => <span className={"flex h-[10px] items-center justify-center rounded-[1px] border border-[#a5a4a9] border-b-[#7a797e] bg-[#efeef2] font-['Liberation_Sans',sans-serif] text-[6.4px] text-[#111] " + w}>{children}</span>;

function FormatPanel() {
  return (
    <div className="w-[117px] shrink-0 border-l border-[#dcdbe0] bg-[#fcfbfd] text-[6.6px] text-[#55535a]">
      <div className="flex h-[16px] font-semibold text-[#66646b]">
        <span className="flex w-[39px] items-center justify-center">Style</span>
        <span className="flex w-[40px] items-center justify-center border-b border-l border-[#dddce1] bg-[#f1f0f4]">Text</span>
        <span className="flex w-[37px] items-center justify-center border-b border-l border-[#dddce1] bg-[#f1f0f4]">Arrange</span>
      </div>
      <div className="flex h-[37px] items-center justify-center gap-[2px] pt-[4px] pl-[3px]">
        <ChevronLeft size={9} color="#999" />
        <div className="grid grid-cols-4 gap-x-[2.700px] gap-y-[3px]">
          {swatches.map((s) => <span key={s} className={"block h-[12px] w-[18px] border " + s} />)}
        </div>
        <ChevronRight size={9} color="#999" />
      </div>
      <div className="flex h-[10px] items-start justify-center gap-[3.400px] border-b border-[#e6e5e9] pt-[1px] pl-[2px]">
        {[0, 1, 2, 3, 4, 5].map((i) => <span key={i} className={"block h-1 w-1 rounded-full border " + (i ? "border-[#b9b8be]" : "border-[#6cb6f0] bg-[#6cb6f0]")} />)}
      </div>
      <div className="h-[27px] border-b border-[#e6e5e9] pt-[1px] pr-1.5 pl-[7px]">
        <div className="flex h-[12px] items-center font-semibold"><Chk on /><span className="ml-[3px] flex-1">Fill</span><span className="flex h-[10px] w-[23px] items-center justify-center rounded-xs border border-[#999] bg-[#eee]"><span className="block h-[6px] w-[18px] border border-black bg-white" /></span></div>
        <div className="flex h-[12px] items-center text-[#77757c]"><Chk /><span className="ml-[3px]">Gradient</span></div>
      </div>
      <div className="h-[60px] border-b border-[#e6e5e9] pt-[3px] pr-1.5 pl-[7px]">
        <div className="flex h-[14px] items-center font-semibold"><Chk on /><span className="ml-[3px] flex-1">Line</span><span className="flex h-[10px] w-[23px] items-center justify-center rounded-xs border border-[#999] bg-[#eee]"><span className="block h-[7px] w-[19px] bg-black" /></span></div>
        <div className="flex h-[14px] items-center justify-between pl-[7px]"><span className="flex h-[10px] w-[61px] items-center border border-[#cfced3] bg-white"><span className="mx-[3px] h-px w-[41px] bg-[#555]" /><span className="flex h-full flex-1 items-center justify-center border-l border-[#cfced3]"><Caret /></span></span><NumBox v="1 pt" /></div>
        <div className="flex h-[13px] items-center justify-between pl-2.5 text-[#77757c]"><span>Perimeter</span><NumBox v="0 pt" /></div>
        <div className="mt-[3px] flex h-[12px] items-center justify-between font-semibold"><span>Opacity</span><NumBox v="100 %" /></div>
      </div>
      <div className="grid h-[27px] grid-cols-[53px_1fr] content-center border-b border-[#e6e5e9] pl-[8px] font-semibold text-[#77757c]">
        {["Rounded", "Shadow", "Glass", "Sketch"].map((t) => <span key={t} className="flex h-[12px] items-center gap-[3px]"><Chk />{t}</span>)}
      </div>
      <div className="flex h-[43px] flex-wrap content-start gap-x-[1px] gap-y-[1px] pt-[5px] pl-[7px]">
        <Btn w="w-[51px]">Edit Style</Btn><Btn w="w-[51px]">Edit Image</Btn><Btn w="w-[51px]">Copy Style</Btn><Btn w="w-[51px]">Paste Style</Btn><Btn w="w-[103px]">Set as Default Style</Btn>
      </div>
      <div className="flex h-[10px] items-center bg-[#ebeaee] pl-[3px] font-bold text-[#222]"><span className="w-[5px] text-[5px] text-[#888]">▸</span><span className="w-[52px]">Property</span>Value</div>
    </div>
  );
}

const Notebook = () => <svg width="7" height="9" viewBox="0 0 7 9"><path fill="#fbe9de" stroke="#dcae95" strokeWidth=".8" d="M.5 .5h6v8h-6z" /><path stroke="#e87a35" d="M2 3h3M2 5h3" /></svg>;
const PlainDoc = () => <svg width="7" height="9" viewBox="0 0 7 9"><path fill="#f8f8fa" stroke="#c4c4c9" strokeWidth=".8" d="M.5 .5h4l2 2v6h-6z" /><path stroke="#cfcfd4" strokeWidth=".7" d="M2 4h3M2 6h3" /></svg>;
const files = [
  ["Lecture+Not….pdf", <span className="block h-2 w-[7px] rounded-[1px] bg-[#e5213b]" />], ["spell_corrector.py", <PlainDoc />], ["test.gif", <span className="block h-[7px] w-2 rounded-[1px] border border-[#8e1a90] bg-[#d01ca0]" />], ["big.txt", <PlainDoc />],
  ["spell-corre….ipynb", <Notebook />], ["edit+distance.ipynb", <Notebook />], ["soundex.ipynb", <Notebook />],
];
function SharedScreen() {
  return (
    <div className="flex h-[529px] w-[939px] flex-col border border-t-2 border-[#e0170e] bg-white font-['Noto_Sans',sans-serif]">
      <InnerChrome />
      <DrawioHeader />
      <div className="flex h-[384px] shrink-0">
        <ShapesPanel />
        <div className="w-[717px] shrink-0">
          <Canvas />
          <div className="flex h-[19px] items-center border-t border-[#e0dfe4] bg-[#f4f3f7] text-[6.6px]">
            <span className="ml-[9px] w-[22px] text-[9px] text-[#555]">⋮</span>
            <span className="flex h-full w-[45px] items-center justify-center border-x border-[#e0dfe4] bg-white font-bold text-[#ee7d1b]">Page-1</span>
            <Plus className="ml-[15px]" size={8} color="#555" />
          </div>
        </div>
        <FormatPanel />
      </div>
      <div className="flex flex-1 items-center border-t border-[#dcdbe0] bg-white pl-[1px] text-[7.4px] text-[#33353a]">
        {files.map(([name, icon]) => (
          <div key={name} className="flex h-[23px] w-[114px] items-center border-r border-[#d0cfd4]">
            <span className="ml-[7px] flex w-2 justify-center">{icon}</span>
            <span className="ml-[6px] w-[73px] whitespace-nowrap">{name}</span>
            <ChevronUp className="ml-[5px]" size={7} strokeWidth={2.500} color="#555" />
          </div>
        ))}
        <span className="ml-[78px] flex h-[15px] w-[43px] items-center justify-center rounded-xs border border-[#dcdce2] text-[7px] font-medium text-[#2a68d8]">Show all</span>
        <X className="ml-[5px]" size={8} strokeWidth={2.500} color="#444" />
      </div>
    </div>
  );
}

const ctl = "flex w-[52px] items-center justify-center";
function CallControls() {
  return (
    <div className="absolute top-[441px] left-[373px] flex h-[52px] w-[485px] rounded-[4px] shadow-[0_3px_14px_rgba(0,0,0,.5)]">
      <div className="flex w-[69px] items-center justify-center rounded-l-[4px] border-r border-[#151515] bg-[#454545] text-[14.5px] tracking-[0.2px] text-[#a3a2a2]">15:47</div>
      <div className={ctl + " bg-[#454545]"}>
        <svg width="24" height="24" viewBox="0 0 24 24"><path fill="#fff" d="M3 4.500h10.500q2.500 0 2.500 2.500v2.500l6-4v13l-6-4v3q0 2.500-2.500 2.500H3.500Q1 20 1 17.500V7q0-2 2-2.500z" /><path d="M2.500 1.500L23 22" stroke="#454545" strokeWidth="1.500" /><path d="M1.500 1.500L22 22" stroke="#fff" strokeWidth="1.400" /></svg>
      </div>
      <div className={ctl + " relative bg-[#3a3144]"}>
        <svg width="20" height="24" viewBox="0 0 20 24"><rect x="6" y="1.500" width="8" height="14" rx="4" fill="#e2d9f8" /><path d="M3 11.500q0 7 7 7t7-7M10 18.500V22.500" stroke="#e2d9f8" strokeWidth="1.400" fill="none" /></svg>
        <div className="absolute -top-[37px] left-[6px] flex h-[29px] w-10 items-center justify-center rounded-[4px] bg-[#373737] text-[12px] tracking-[-0.2px] text-[#eee] shadow-[0_2px_8px_rgba(0,0,0,.4)]">
          Mute
          <svg className="absolute top-[28px] left-3" width="16" height="6" viewBox="0 0 16 6"><path fill="#373737" d="M1 0h14L9 5q-1 1-2 0z" /></svg>
        </div>
      </div>
      <div className={ctl + " bg-[#454545]"}>
        <svg width="24" height="20" viewBox="0 0 24 20" fill="none" stroke="#fff" strokeWidth="1.300"><rect x="1.700" y="2.500" width="20.600" height="15" rx="2" /><path d="M12 14.500V6M8.500 9L12 5.500 15.500 9" /></svg>
      </div>
      <div className={ctl + " bg-[#454545]"}><svg width="20" height="6" viewBox="0 0 20 6" fill="#fff"><circle cx="3.300" cy="3" r="2.200" /><circle cx="10" cy="3" r="2.200" /><circle cx="16.700" cy="3" r="2.200" /></svg></div>
      <div className={ctl + " bg-[#3b3b3b]"}>
        <svg width="24" height="24" viewBox="0 0 24 24" fill="none" stroke="#fff" strokeWidth="1.300" strokeLinejoin="round"><path d="M4 14.500V6.500a1.450 1.450 0 0 1 2.900 0V11.500 4a1.450 1.450 0 0 1 2.900 0v7V3a1.450 1.450 0 0 1 2.900 0v8V4.500a1.450 1.450 0 0 1 2.900 0V13.500l2.600-1.300q1.800-.5 2.300.8L15.500 19Q13.500 22.300 10 22.300 4 22.300 4 14.500z" /></svg>
      </div>
      <div className={ctl + " relative bg-[#3b3b3b]"}>
        <svg width="24" height="24" viewBox="0 0 24 24" fill="none" stroke="#fff" strokeWidth="1.400"><path d="M12 2a10 10 0 1 1-4.800 18.800L2 22l1.300-5A10 10 0 0 1 12 2zM8 10h8M8 14h5" /></svg>
        <span className="absolute top-[13px] left-[30px] h-[9px] w-[9px] rounded-full bg-[#f0702c]" />
      </div>
      <div className={ctl + " bg-[#3b3b3b]"}>
        <svg width="24" height="24" viewBox="0 0 24 24" fill="none" stroke="#fff" strokeWidth="1.400"><circle cx="8.500" cy="6.500" r="4" /><circle cx="17.500" cy="7.500" r="2.700" /><path d="M4 13h9q2 0 2 2.300 0 6-6.500 6T2 15.300Q2 13 4 13zM17 13h3.500q1.700 0 1.700 2 0 4.700-5.200 4.700" /></svg>
      </div>
      <div className={ctl + " rounded-r-[4px] bg-[#a30f3a]"}>
        <svg width="24" height="12" viewBox="0 0 24 12"><path fill="#fff" d="M1.500 8Q1 2 12 2t10.500 6q0 3-2 2.500L16.500 9.500q-1-.5-.8-3Q12 5.300 8.300 6.500q.2 2.500-.8 3l-4 1Q1.500 11 1.500 8z" /></svg>
      </div>
    </div>
  );
}

const MicOff = () => (
  <svg width="16" height="16" viewBox="0 0 16 16"><rect x="5.500" y="1" width="5" height="9" rx="2.500" fill="#fff" /><path d="M3.500 7.500q0 4.500 4.500 4.500t4.500-4.500M8 12v3" stroke="#fff" fill="none" /><path d="M1.500 2.500l13 12.500" stroke="#333" strokeWidth="2.500" /><path d="M1.500 1.500l13 13" stroke="#fff" /></svg>
);
const people = [
  { i: "VS", n: "SHARMA, VIKASSHA…", bg: "bg-[#383838]", av: "bg-[#e3dbee] text-[#4b3470]", muted: true, nw: "w-[128px]" },
  { i: "JP", n: "Pal, Jitendra J", bg: "bg-[#2b2b2b]", av: "bg-[#e9ded8] text-[#5f4438]", muted: true, nw: "w-[77px]" },
  { i: "US", n: "Somasekar, Umashankar U", bg: "bg-radial from-[#5a3f96] to-[#2c2640] to-75%", av: "bg-[#e3dbee] text-[#4b3470] ring-2 ring-[#2a2140] outline-[3px] outline-offset-2 outline-[#8a63e0]", nw: "" },
];

export default function App() {
  return (
    <div className="flex h-[768px] w-[1366px] flex-col overflow-hidden bg-black font-['Noto_Sans',sans-serif]">
      <TopPanel />
      <div className="flex min-h-0 flex-1">
        <Launcher />
        <div className="flex min-w-0 flex-1 flex-col">
          <ChromeBar />
          <TeamsHeader />
          <div className="flex min-h-0 flex-1">
            <Sidebar />
            <div className="flex w-[1233px] flex-col">
              <div className="relative h-[529px] shrink-0 bg-black pl-[147px]">
                <SharedScreen />
                <div className="absolute top-[494px] left-8 text-[11.5px] leading-[18px] tracking-[-0.2px] whitespace-nowrap text-[#ececec] [text-shadow:0_1px_2px_rgba(0,0,0,.8)]">Somasekar, Umashankar U</div>
                <CallControls />
              </div>
              <div className="flex min-h-0 flex-1 justify-end bg-[#1b1b1b]">
                {people.map((p) => (
                  <div key={p.i} className={"flex w-[180px] flex-col items-center " + p.bg}>
                    <div className={"mt-[25px] flex h-11 w-11 shrink-0 items-center justify-center rounded-full text-[16px] font-semibold " + p.av}>{p.i}</div>
                    <div className="mt-[7px] flex h-[18px] w-full items-center pl-[15px] text-[11.5px] tracking-[-0.2px] whitespace-nowrap text-[#f0f0f0]">
                      <span className={p.nw}>{p.n}</span>{p.muted && <MicOff />}
                    </div>
                  </div>
                ))}
              </div>
            </div>
          </div>
        </div>
      </div>
    </div>
  );
}
